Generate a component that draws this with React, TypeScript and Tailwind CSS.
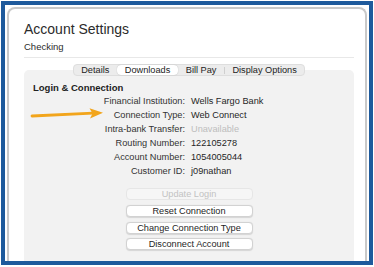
const rows: { label: string; value: string; muted?: boolean }[] = [
  { label: "Financial Institution:", value: "Wells Fargo Bank" },
  { label: "Connection Type:", value: "Web Connect" },
  { label: "Intra-bank Transfer:", value: "Unavailable", muted: true },
  { label: "Routing Number:", value: "122105278" },
  { label: "Account Number:", value: "1054005044" },
  { label: "Customer ID:", value: "j09nathan" },
];

const tabs = ["Details", "Downloads", "Bill Pay", "Display Options"];

function TabBar() {
  return (
    <div className="relative z-10 mt-[6px] flex justify-center">
      <div className="flex h-[12px] items-stretch rounded-[4px] border border-[#dedede] bg-[#ececec] text-[9.2px] leading-[10px] text-[#222]">
        {tabs.map((t, i) => {
          const active = t === "Downloads";
          return (
            <div key={t} className="flex items-center">
              {i === 3 && <div className="h-[7px] w-px bg-[#cfcfcf]" />}
              <div
                className={
                  active
                    ? "flex h-full items-center rounded-[4px] bg-white px-[8px] shadow-[0_0_1px_rgba(0,0,0,0.3)]"
                    : "flex h-full items-center px-[7.5px]"
                }
              >
                {t}
              </div>
            </div>
          );
        })}
      </div>
    </div>
  );
}

function Button({ label, disabled = false }: { label: string; disabled?: boolean }) {
  return (
    <div
      className={
        disabled
          ? "flex h-[12px] w-[127px] items-center justify-center rounded-[4px] border border-[#e6e6e6] bg-[#f6f6f6] text-[#c2c2c2]"
          : "flex h-[12px] w-[127px] items-center justify-center rounded-[4px] border border-[#d2d2d2] bg-white text-[#1e1e1e] shadow-[0_0.5px_1px_rgba(0,0,0,0.12)]"
      }
    >
      {label}
    </div>
  );
}

export default function App() {
  return (
    <div
      className="relative h-[267px] w-[374px] bg-white px-[1px] pb-[2px] pt-[1px]"
      style={{ fontFamily: '"Liberation Sans", Arial, sans-serif' }}
    >
      <div className="h-full border-[4px] border-[#1e5a9c] bg-white px-[2px] pt-[2px]">
        <div className="h-full overflow-hidden rounded-t-[8px] border-[2px] border-b-0 border-[#c9c9c9] bg-white pl-[15px] pr-[11px] pt-[12px]">
          <h1 className="text-[14px] leading-[17px] text-[#2b2b2b]">Account Settings</h1>
          <p className="mt-[3px] text-[9.5px] leading-[12px] text-[#2b2b2b]">Checking</p>
          <div className="mt-[4px] h-px bg-[#e8e8e8]" />

          <TabBar />

          <div className="-mt-[6px] h-[200px] rounded-t-[5px] bg-[#f2f2f2] pl-[9px] pt-[12px] text-[9.2px]">
            <div className="text-[9.5px] font-bold leading-[12px] text-[#222]">Login &amp; Connection</div>
            <div className="grid grid-cols-[152px_1fr] gap-x-[6px] leading-[14px]">
              {rows.map((r) => (
                <div key={r.label} className="contents">
                  <div className="text-right text-[#333]">{r.label}</div>
                  <div className={r.muted ? "text-[#bdbdbd]" : "text-[#262626]"}>{r.value}</div>
                </div>
              ))}
            </div>

            <div className="mt-[10px] flex flex-col items-center gap-[4.75px] pr-[9px] leading-[10px]">
              <Button label="Update Login" disabled />
              <Button label="Reset Connection" />
              <Button label="Change Connection Type" />
              <Button label="Disconnect Account" />
            </div>
          </div>
        </div>
      </div>

      <svg className="absolute left-[30px] top-[107px]" width="74" height="13" viewBox="0 0 74 13">
        <line x1="2" y1="9" x2="63" y2="6.2" stroke="#f2a51c" strokeWidth="2.8" strokeLinecap="round" />
        <polygon points="59.5,1.2 73,5.8 60,11.6 62.5,6.4" fill="#f2a51c" />
      </svg>
    </div>
  );
}
